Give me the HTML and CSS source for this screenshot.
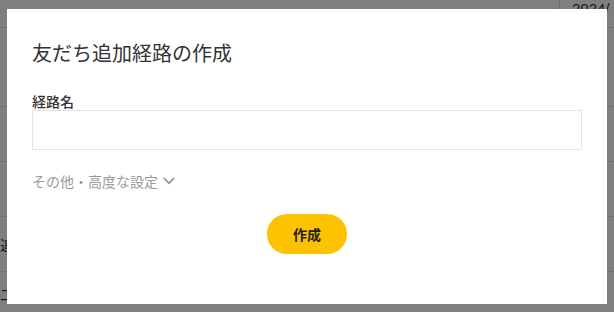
FILE: index.html
```html
<!DOCTYPE html>
<html lang="ja">
<head>
<meta charset="utf-8">
<title>友だち追加経路の作成</title>
<link rel="stylesheet" href="styles.css">
</head>
<body>
<div class="page">
  <div class="head-row">
    <div class="head-spacer"></div>
    <div class="head-date">2024/</div>
  </div>
  <div class="row row-first"></div>
  <div class="row"></div>
  <div class="row"></div>
  <div class="row"><span class="cell-text">追加</span></div>
  <div class="row row-top"><span class="cell-text">二次元</span></div>
</div>
<div class="overlay">
  <div class="modal">
    <h1 class="modal-title">友だち追加経路の作成</h1>
    <label class="field-label" for="route">経路名</label>
    <input class="field-input" id="route" type="text">
    <div class="advanced">
      <span>その他・高度な設定</span>
      <svg class="chevron" width="12" height="8" viewBox="0 0 12 8"><path d="M1.2 1.4 L6 6.2 L10.8 1.4" fill="none" stroke="#a0a0a0" stroke-width="2" stroke-linecap="round" stroke-linejoin="round"/></svg>
    </div>
    <div class="actions">
      <button class="btn-create" type="button">作成</button>
    </div>
  </div>
</div>
</body>
</html>
```
FILE: styles.css
```css
* { box-sizing: border-box; }
html, body { margin: 0; padding: 0; }
body {
  width: 614px;
  height: 312px;
  overflow: hidden;
  background: #fff;
  font-family: "Noto Sans CJK JP", "Noto Sans", sans-serif;
  color: #333;
}
.page {
  display: flex;
  flex-direction: column;
}
.head-row {
  display: flex;
  height: 28px;
  border-bottom: 1px solid #ddd;
  overflow: hidden;
}
.head-spacer {
  flex: 0 0 560px;
  border-right: 1px solid #ddd;
}
.head-date {
  flex: 0 0 auto;
  padding-left: 12px;
  font-family: "Liberation Sans", sans-serif;
  font-size: 15px;
  line-height: 18px;
  white-space: nowrap;
  color: #333;
}
.row {
  height: 55px;
  border-bottom: 1px solid #ddd;
  display: flex;
  align-items: center;
}
.row-first { height: 79px; }
.row-top {
  align-items: flex-start;
  padding-top: 12px;
}
.cell-text {
  font-size: 14px;
  line-height: 20px;
  white-space: nowrap;
}
.overlay {
  position: fixed;
  inset: 0;
  background: rgba(0, 0, 0, 0.5);
  display: flex;
  align-items: center;
  justify-content: center;
}
.modal {
  width: 600px;
  height: 295px;
  background: #fff;
  padding: 30px 25px 0;
  display: flex;
  flex-direction: column;
}
.modal-title {
  margin: 0;
  font-size: 20px;
  line-height: 28px;
  font-weight: 400;
  color: #333;
}
.field-label {
  margin-top: 25px;
  font-size: 14px;
  line-height: 18px;
  font-weight: 500;
  color: #333;
}
.field-input {
  margin: 0;
  width: 550px;
  height: 40px;
  border: 1px solid #e3e3e3;
  border-radius: 0;
  outline: none;
  padding: 0 10px;
  font: inherit;
}
.advanced {
  margin-top: 21px;
  display: flex;
  align-items: center;
  gap: 5px;
  font-size: 14px;
  line-height: 20px;
  color: #999;
}
.chevron { margin-top: 1px; }
.actions {
  margin-top: 23px;
  display: flex;
  justify-content: center;
}
.btn-create {
  width: 80px;
  height: 40px;
  border: none;
  border-radius: 20px;
  background: #fdc300;
  color: #222;
  font-family: inherit;
  font-size: 14px;
  font-weight: 700;
  padding: 0;
}
```
